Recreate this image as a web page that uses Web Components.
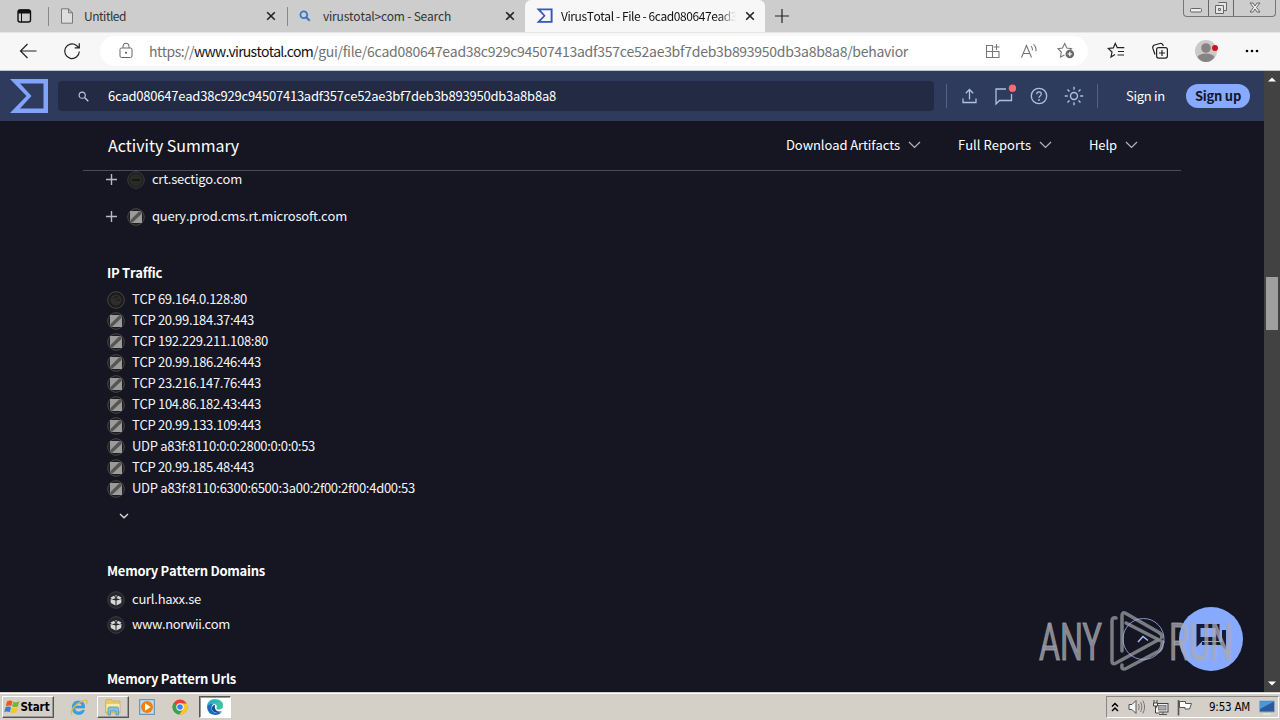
<!DOCTYPE html>
<html lang="en">
<head>
<meta charset="utf-8">
<title>VirusTotal - File</title>
<style>
    html, body { margin: 0; height: 100%; overflow: hidden; }
    body {
        background: #151622;
        font-family: "Noto Sans CJK SC", "Noto Sans", sans-serif;
        font-size: 13px;
        line-height: 20px;
    }
</style>
</head>
<body>
<desktop-screen></desktop-screen>

<script>
const ICONS = {
    tabs: [16, 16, `<rect x="2" y="2" width="12.5" height="12" rx="2" fill="none" stroke="#111" stroke-width="1.4"/><path d="M2 3.5q0-2 2-2h8.5q2 0 2 2V5.500H2z" fill="#111"/><path d="M5.500 5v9" stroke="#111"/>`],
    page: [14, 16, `<path d="M1.500.8h7l4 4v10.400h-11zM8.500.8v4h4" fill="#dedede" stroke="#777" stroke-width="1"/>`],
    lens: [12, 12, `<circle cx="4.800" cy="4.800" r="3.400" fill="none" stroke="#3a76c4" stroke-width="1.800"/><path d="M7.200 7.200l3.500 3.500" stroke="#3a76c4" stroke-width="2"/>`],
    vt: [40, 36, `<path d="M1 1H39V35H1L17.500 18z M11 5.500L22.500 18L11 30.500H34.500V5.500z" fill="currentColor" fill-rule="evenodd"/>`],
    close: [10, 10, `<path d="M1.200 1.200l7.600 7.600M8.800 1.200L1.200 8.800" stroke="#222" stroke-width="1.600"/>`],
    add: [14, 14, `<path d="M7 0v14M0 7h14" stroke="#222" stroke-width="1.200"/>`],
    back: [18, 16, `<path d="M17.500 8H1.500M8.500 1L1.500 8l7 7" fill="none" stroke="#222" stroke-width="1.200"/>`],
    reload: [18, 18, `<path d="M16.300 9.500A7.300 7.300 0 1 1 13.500 3.500L16 5.600M16.300 1.200V5.800H11.700" fill="none" stroke="#222" stroke-width="1.200"/>`],
    lock: [14, 17, `<rect x="1" y="6" width="12" height="9.500" rx="1.500" fill="none" stroke="#666"/><path d="M4 6V4.200a3 3 0 0 1 6 0V6" fill="none" stroke="#666"/><circle cx="7" cy="10.800" r="1" fill="#555"/>`],
    apps: [16, 16, `<path d="M1.500 2.500h6v12h-6zM1.500 8.500h12.500v6h-6.500M14 8.500v6M11.500 1v6M8.500 4h6" fill="none" stroke="#777" stroke-width="1.100"/>`],
    read: [18, 16, `<path d="M1.500 14.500L6.500 2.500l5 12M3.300 10.500h6.400M11 3.200q1.700 1.500 1.500 4M13.500 1.300q3 2.700 2.500 7" fill="none" stroke="#777" stroke-width="1.100"/>`],
    staradd: [18, 17, `<path d="M7.500 13L3.500 15l.8-5-3.300-3.300 4.500-.7L7.700 1.500 9.800 6l4.700.7-1.500 1.500" fill="none" stroke="#777" stroke-width="1.100"/><circle cx="12.800" cy="12" r="4.300" fill="#666"/><path d="M12.800 9.700v4.600M10.500 12h4.600" stroke="#fff" stroke-width="1.200"/>`],
    favs: [18, 17, `<path d="M8 12.500L4 15l1-5-3.700-3.500 5-.6L8.300 1.500 10.300 5.700h7M11 9.500h6M10.500 13h6.500" fill="none" stroke="#222" stroke-width="1.200"/>`],
    collect: [18, 18, `<path d="M4 12.500L1.800 6.200Q1.300 3.800 3.500 3L9 1.500q2-.5 2.800 1.200L12.300 4" fill="none" stroke="#222" stroke-width="1.200"/><rect x="5.600" y="5.600" width="10.800" height="10.500" rx="2" fill="#f7f7f7" stroke="#222" stroke-width="1.200"/><path d="M11 8v6M8 11h6" stroke="#222" stroke-width="1.200"/>`],
    avatar: [24, 24, `<circle cx="12" cy="12" r="11" fill="#ccc9c7"/><circle cx="12" cy="9" r="4.800" fill="#858383"/><path d="M3.500 18q2-3.500 8.500-3.500t8.500 3.500q-3 5-8.500 5t-8.500-5z" fill="#858383"/><circle cx="21" cy="9" r="3" fill="#d4101d"/>`],
    dots: [14, 4, `<circle cx="2" cy="2" r="1.300"/><circle cx="7" cy="2" r="1.300"/><circle cx="12" cy="2" r="1.300"/>`],
    search: [11, 11, `<circle cx="4.200" cy="4.200" r="3.100" fill="none" stroke="#c4cde2" stroke-width="1.100"/><path d="M6.500 6.500l3.800 3.800" stroke="#c4cde2" stroke-width="1.300"/>`],
    upload: [15, 16, `<path d="M1 10.500v4h13v-4M7.500 11.500V1.800M3.800 5.200L7.500 1.500l3.700 3.700" fill="none" stroke="#aebfe2" stroke-width="1.300"/>`],
    chat: [24, 22, `<path d="M14 5H4v15l3.500-3.500H19.500V10" fill="none" stroke="#aebfe2" stroke-width="1.300"/><circle cx="20.500" cy="4.200" r="3.700" fill="#fa6a73"/>`],
    help: [18, 18, `<circle cx="9" cy="9" r="7.700" fill="none" stroke="#aebfe2" stroke-width="1.300"/><path d="M6.700 7.300q0-2.400 2.300-2.400t2.300 2.100q0 1.100-1.200 1.900T9 10.900" fill="none" stroke="#aebfe2" stroke-width="1.200"/><circle cx="9" cy="13" r=".9" fill="#aebfe2"/>`],
    sun: [20, 20, `<circle cx="10" cy="10" r="3.500" fill="none" stroke="#aebfe2" stroke-width="1.400"/><path d="M10 .8v3M10 16.200v3M.8 10h3M16.200 10h3M3.500 3.500l2 2M14.500 14.500l2 2M3.500 16.500l2-2M14.500 5.500l2-2" stroke="#aebfe2" stroke-width="1.400"/>`],
    caret: [13, 8, `<path d="M1 1l5.500 5.500L12 1" fill="none" stroke="#b4b5c2" stroke-width="1.200"/>`],
    more: [10, 6, `<path d="M1 1l4 3.800L9 1" fill="none" stroke="#ddd" stroke-width="1.300"/>`],
    plus: [11, 11, `<path d="M5.500 0v11M0 5.500h11" stroke="#b9bac2" stroke-width="1.400"/>`],
    minus: [18, 18, `<circle cx="9" cy="9" r="8.300" fill="#202020" stroke="#3a3938"/><circle cx="9" cy="9" r="6.300" fill="#2b2b26"/><path d="M5 9h8" stroke="#11120f" stroke-width="1.500"/>`],
    dark: [18, 18, `<circle cx="9" cy="9" r="8.300" fill="#1b1b1d" stroke="#464544"/><circle cx="9" cy="9" r="5.600" fill="#2f2e2c"/><path d="M6 8q2-3 5-2M9 9h4" stroke="#151515" fill="none"/>`],
    square: [18, 18, `<circle cx="9" cy="9" r="8.300" fill="#1d1c20" stroke="#4a4844"/><path d="M3 3h10.500L15 5v10H4.500L3 13z" fill="#9b9b9b"/><path d="M12 3.500L3.500 12v2.500h2L14.500 6V3.500z" fill="#565553"/>`],
    cube: [18, 18, `<circle cx="9" cy="9" r="8.300" fill="#24252b" stroke="#3c3c40"/><path d="M3.500 6.500L7 4.800l1.600 2.500-3.600.9zM14.500 6.500L11 4.800 9.400 7.300l3.600.9zM3.500 8l5 1.600v5L3.800 12zM14.500 8l-5 1.600v5l4.700-2.600z" fill="#d6d6d6"/><path d="M7.800 4.200h2.400L9 6z" fill="#aaa"/>`],
    windows: [17, 16, `<path d="M3 2.500q3-2 5.500-.3L7.300 7Q4.800 5.800 1.800 7.200z" fill="#e55b20"/><path d="M9.300 2.800q3 1.200 6-.6L14 7.200q-3 1.600-5.900.2z" fill="#74b63c"/><path d="M1.500 8.200q3-1.500 5.500 0l-1.200 5Q3 12 .3 13.300z" fill="#3680d0"/><path d="M7.900 8.400q3 1.400 5.900-.1l-1.300 5q-3 1.500-5.900.1z" fill="#f5c427"/>`],
    ie: [18, 18, `<path d="M14.500 10H4.700q.2 4 4.200 4 2.500 0 3.300-1.800h2.200Q13 16.500 9 16.500q-6.700 0-6.700-7T9 3q6.200 0 5.500 7zM4.900 8h7.200Q11.900 5 8.700 5T4.900 8z" fill="#39a4df" stroke="#2481c0" stroke-width=".5"/><path d="M2 16.500Q-.5 14 5 8.300T16 2.200q2.500 1 .3 4" fill="none" stroke="#eaba3a" stroke-width="1.300"/>`],
    explorer: [18, 18, `<path d="M1.500 3.500l1-2h5l1 1.500h7.500v12h-14.500z" fill="#e9c968" stroke="#c3a34d" stroke-width=".6"/><path d="M2.500 6h13v7h-13z" fill="#faeaa5"/><path d="M4 17v-6.500q0-1.500 1.500-1.500h7.500q1.500 0 1.500 1.500V17h-2.500v-4H6.500v4z" fill="#7cc4e4" stroke="#4a91b7" stroke-width=".7"/>`],
    media: [16, 16, `<rect x=".7" y=".7" width="14.600" height="14.600" fill="#c3dcf1" stroke="#5188b9"/><circle cx="8" cy="8" r="6" fill="#f08012"/><path d="M6 4.300l5.700 3.700L6 11.700z" fill="#fff"/>`],
    chrome: [16, 16, `<circle cx="8" cy="8" r="7.500" fill="#e64133"/><path d="M8 8L1.500 4.300A7.500 7.500 0 0 0 7 15.450L11.300 10z" fill="#35a552"/><path d="M8 8l3.300 2L7.200 15.500A7.500 7.500 0 0 0 14.700 4.600H8z" fill="#f9c821"/><circle cx="8" cy="8" r="3.700" fill="#fff"/><circle cx="8" cy="8" r="2.800" fill="#3f82eb"/>`],
    edge: [18, 18, `<path d="M1 9Q1.300 1 9 1q7.700 0 8 6.500Q17 11.500 13 11.500q-3 0-2.500-1.500Q12 6.500 7.500 6 3 6 1 9z" fill="#3bc2a5"/><path d="M1 9Q2 2.500 8.500 2.500 12 2.700 13 5q-6-3-9 3z" fill="#29a5dc"/><path d="M1 9q2-3.500 6.500-3Q5 7.500 5.500 11q1.500 4.500 6.500 4 2.700-.4 4-1.500Q13.500 17.200 9 17 1.500 16.500 1 9z" fill="#176dbc"/><path d="M5.500 10q1.500-3.500 3.500-3-.8 3 1 5.200 2.500 2 6 .7-.7 1.600-4 2Q6.500 15 5.500 10z" fill="#124c99"/>`],
    up: [8, 10, `<path d="M1 4.500l3-3 3 3M1 9l3-3 3 3" fill="none" stroke="#000" stroke-width="1.500"/>`],
    sound: [18, 16, `<path d="M1 5.500h3l4-4v13l-4-4H1z" fill="#f7f7f7" stroke="#555"/><path d="M10.500 5q1.500 3 0 6M12.700 3q2.600 5 0 10M14.800 1.500q3.500 6.500 0 13" fill="none" stroke="#777"/>`],
    network: [18, 17, `<rect x="4.500" y="4.500" width="11.500" height="8.500" fill="#eee" stroke="#444"/><rect x="6.500" y="6.500" width="7.500" height="4.500" fill="#aaa" stroke="#666" stroke-width=".7"/><path d="M7 15.500h8M11 13v2" stroke="#555"/><path d="M2 1v3M5 1v3M1.500 4h4v3h-4zM3.500 7v7h4" fill="#fff" stroke="#444"/>`],
    flag: [17, 17, `<path d="M2.500 1v15.500" stroke="#555" stroke-width="1.600"/><path d="M3.500 2.500h6v2h6L13.500 10H9V8.500H3.500z" fill="#fff" stroke="#555"/>`],
    monitor: [16, 15, `<path d="M.5 1h15v11H.5z" fill="#2b5b9b" stroke="#8eaacb"/><path d="M1 1.500h14L1 9z" fill="#4b98d7"/><path d="M4 14h8" stroke="#eee"/>`],
    scrollup: [8, 5, `<path d="M0 4.500L4 .5l4 4z" fill="#fff"/>`],
    scrolldown: [8, 5, `<path d="M0 .5l4 4 4-4z" fill="#fff"/>`]
};

class XIcon extends HTMLElement {
    connectedCallback() {
        const [w, h, body] = ICONS[this.getAttribute("name")];
        const width = this.getAttribute("width") || w;
        const root = this.shadowRoot || this.attachShadow({mode: "open"});
        root.innerHTML = `
            <style>
                :host { display: block; flex: none; }
                svg { display: block; }
            </style>
            <svg width="${width}" height="${width * h / w}" viewBox="0 0 ${w} ${h}">${body}</svg>
        `;
    }
}
customElements.define("x-icon", XIcon);

// One line of text, tracked so that it fills the given width
class FitText extends HTMLElement {
    connectedCallback() {
        const root = this.shadowRoot || this.attachShadow({mode: "open"});
        root.innerHTML = `
            <style>
                :host { display: flex; flex: none; white-space: nowrap; }
                span { flex: none; font-kerning: none; font-variant-ligatures: none; }
            </style>
            <span><slot></slot></span>
        `;
        const span = root.querySelector("span");
        const width = Number(this.getAttribute("width"));
        const spare = width - span.getBoundingClientRect().width;
        span.style.letterSpacing = `${spare / this.textContent.length}px`;
        this.style.width = `${width}px`;
    }
}
customElements.define("fit-text", FitText);

class BrowserTab extends HTMLElement {
    constructor() {
        super();
        this.attachShadow({mode: "open"}).innerHTML = `
            <style>
                :host {
                    display: flex;
                    align-items: center;
                    box-sizing: border-box;
                    width: 239px;
                    height: 32px;
                    padding: 0 10px 0 12px;
                    color: #333;
                    font-size: 12px;
                    border-left: 1px solid transparent;
                    background: linear-gradient(#888, #888) 0 50% / 1px 19px no-repeat;
                }
                :host([active]) {
                    width: 240px;
                    padding-left: 10px;
                    background: #f7f7f7;
                    border-radius: 6px 6px 0 0;
                    color: #111;
                }
                :host([active]) .title {
                    -webkit-mask-image: linear-gradient(90deg, #000 90%, transparent);
                    mask-image: linear-gradient(90deg, #000 90%, transparent);
                }
                .icon { width: 24px; }
                :host([active]) .icon { width: 25px; }
                .title { flex: 1; overflow: hidden; margin-right: 9px; }
            </style>
            <div class="icon"><slot name="icon"></slot></div>
            <div class="title"><slot></slot></div>
            <x-icon name="close"></x-icon>
        `;
    }
}
customElements.define("browser-tab", BrowserTab);

class TabStrip extends HTMLElement {
    connectedCallback() {
        this.attachShadow({mode: "open"}).innerHTML = `
            <style>
                :host { display: flex; height: 32px; background: #cdcdcd; align-items: center; }
                .switcher { width: 31px; padding-left: 16px; }
                .new { margin-left: 10px; flex: 1; }
                .controls {
                    display: flex;
                    align-self: flex-start;
                    width: 93px;
                    height: 17px;
                    margin-right: 4px;
                    box-sizing: border-box;
                    border: 1px solid #777;
                    border-top: 0;
                    border-radius: 0 0 4px 4px;
                }
                .controls svg { display: block; }
                [slot=icon] { color: #3557b7; }
            </style>
            <div class="switcher"><x-icon name="tabs"></x-icon></div>
            <browser-tab><x-icon slot="icon" name="page"></x-icon><fit-text width="42">Untitled</fit-text></browser-tab>
            <browser-tab><x-icon slot="icon" name="lens"></x-icon><fit-text width="128">virustotal&gt;com - Search</fit-text></browser-tab>
            <browser-tab active><x-icon slot="icon" name="vt" width="17"></x-icon><fit-text width="176">VirusTotal - File - 6cad080647ead3</fit-text></browser-tab>
            <x-icon class="new" name="add"></x-icon>
            <div class="controls">
                <svg width="91" height="16" fill="none" stroke="#666">
                    <path d="M24.500 0v16M49.500 0v16"/>
                    <rect x="6.500" y="8.500" width="11" height="3.500" rx="1" fill="#eee"/>
                    <path d="M34.500 2.500h8v8h-3M31.500 5.500h8v8h-8zM34.500 8.500h2v2h-2z" fill="#e5e5e5"/>
                    <path d="M66 3h3l2 3 2-3h3l-3.500 4.500L76 12h-3l-2-3-2 3h-3l3.500-4.500z" fill="#eee"/>
                </svg>
            </div>
        `;
    }
}
customElements.define("tab-strip", TabStrip);

class AddressBar extends HTMLElement {
    connectedCallback() {
        this.attachShadow({mode: "open"}).innerHTML = `
            <style>
                :host {
                    display: flex;
                    align-items: center;
                    box-sizing: border-box;
                    height: 39px;
                    padding: 0 21px 2px 19px;
                    background: #f7f7f7;
                    border-top: 1px solid #e4e4e4;
                    border-bottom: 1px solid #b9c5d4;
                }
                .reload { margin: 0 19px 0 26px; }
                .pill {
                    display: flex;
                    align-items: center;
                    box-sizing: border-box;
                    width: 988px;
                    height: 30px;
                    padding: 0 13px 0 19px;
                    border-radius: 15px;
                    background: #fff;
                }
                .url { display: flex; flex: 1; margin-left: 16px; color: #717171; font-size: 14px; }
                .url .host { color: #111; }
                .actions { display: flex; align-items: center; gap: 19px; }
                .tools { display: flex; flex: 1; align-items: center; justify-content: space-between; margin-left: 19px; }
                .tools x-icon[name=avatar] { margin-right: 1px; }
            </style>
            <x-icon name="back"></x-icon>
            <x-icon class="reload" name="reload"></x-icon>
            <div class="pill">
                <x-icon name="lock"></x-icon>
                <div class="url">
                    <fit-text width="45">https://</fit-text><fit-text class="host" width="119">www.virustotal.com</fit-text><fit-text width="595">/gui/file/6cad080647ead38c929c94507413adf357ce52ae3bf7deb3b893950db3a8b8a8/behavior</fit-text>
                </div>
                <div class="actions">
                    <x-icon name="apps"></x-icon>
                    <x-icon name="read"></x-icon>
                    <x-icon name="staradd"></x-icon>
                </div>
            </div>
            <div class="tools">
                <x-icon name="favs"></x-icon>
                <x-icon name="collect"></x-icon>
                <x-icon name="avatar"></x-icon>
                <x-icon name="dots"></x-icon>
            </div>
        `;
    }
}
customElements.define("address-bar", AddressBar);

class SiteHeader extends HTMLElement {
    connectedCallback() {
        this.attachShadow({mode: "open"}).innerHTML = `
            <style>
                :host {
                    display: flex;
                    align-items: center;
                    box-sizing: border-box;
                    height: 50px;
                    padding: 0 14px 0 9px;
                    background: #2f3b5c;
                    color: #fff;
                }
                .logo { color: #82a3fb; }
                .search {
                    display: flex;
                    align-items: center;
                    box-sizing: border-box;
                    width: 876px;
                    height: 30px;
                    margin-left: 9px;
                    padding-left: 20px;
                    gap: 19px;
                    border-radius: 4px;
                    background: #232b44;
                }
                .icons {
                    display: grid;
                    grid-template-columns: repeat(4, 35px);
                    place-items: center;
                    box-sizing: border-box;
                    height: 24px;
                    width: 152px;
                    margin-left: 12px;
                    padding-left: 4.500px;
                    border: 1px solid #536284;
                    border-width: 0 1px;
                }
                .icons x-icon[name=chat] { margin-top: -2px; }
                .signin { margin-left: 28px; }
                .signup {
                    display: flex;
                    justify-content: center;
                    align-items: center;
                    width: 64px;
                    height: 24px;
                    margin-left: 21px;
                    border-radius: 12px;
                    background: #87a9ff;
                    color: #151622;
                    font-weight: 700;
                }
            </style>
            <x-icon class="logo" name="vt"></x-icon>
            <div class="search">
                <x-icon name="search"></x-icon>
                <fit-text width="448">6cad080647ead38c929c94507413adf357ce52ae3bf7deb3b893950db3a8b8a8</fit-text>
            </div>
            <div class="icons">
                <x-icon name="upload"></x-icon>
                <x-icon name="chat"></x-icon>
                <x-icon name="help"></x-icon>
                <x-icon name="sun"></x-icon>
            </div>
            <fit-text class="signin" width="39">Sign in</fit-text>
            <div class="signup"><fit-text width="46">Sign up</fit-text></div>
        `;
    }
}
customElements.define("site-header", SiteHeader);

class SummaryBar extends HTMLElement {
    connectedCallback() {
        this.attachShadow({mode: "open"}).innerHTML = `
            <style>
                :host {
                    display: flex;
                    align-items: center;
                    box-sizing: border-box;
                    height: 50px;
                    margin: 0 83px;
                    padding: 0 43px 2px 25px;
                    border-bottom: 1px solid #4b4b5b;
                    color: #fff;
                }
                .title { flex: 1; font-size: 16px; }
                .menu { display: flex; align-items: center; gap: 8px; margin-left: 37px; }
            </style>
            <div class="title"><fit-text width="131">Activity Summary</fit-text></div>
            <div class="menu"><fit-text width="114">Download Artifacts</fit-text><x-icon name="caret"></x-icon></div>
            <div class="menu"><fit-text width="73">Full Reports</fit-text><x-icon name="caret"></x-icon></div>
            <div class="menu"><fit-text width="28">Help</fit-text><x-icon name="caret"></x-icon></div>
        `;
    }
}
customElements.define("summary-bar", SummaryBar);

class ReportRow extends HTMLElement {
    connectedCallback() {
        const expandable = this.hasAttribute("expandable");
        this.attachShadow({mode: "open"}).innerHTML = `
            <style>
                :host { display: flex; align-items: center; height: var(--row-height, 21px); padding-left: 107px; color: #f4f4f8; }
                .toggle { margin: 0 10px 0 -1px; }
                fit-text { margin: 0 0 2px 7px; }
            </style>
            ${expandable ? `<x-icon class="toggle" name="plus"></x-icon>` : ""}
            <x-icon name="${this.getAttribute("icon")}"></x-icon>
            <fit-text width="${this.getAttribute("width")}">${this.getAttribute("label")}</fit-text>
        `;
    }
}
customElements.define("report-row", ReportRow);

class BehaviorReport extends HTMLElement {
    connectedCallback() {
        const traffic = [
            ["dark", 115, "TCP 69.164.0.128:80"],
            ["square", 122, "TCP 20.99.184.37:443"],
            ["square", 136, "TCP 192.229.211.108:80"],
            ["square", 129, "TCP 20.99.186.246:443"],
            ["square", 129, "TCP 23.216.147.76:443"],
            ["square", 129, "TCP 104.86.182.43:443"],
            ["square", 129, "TCP 20.99.133.109:443"],
            ["square", 183, "UDP a83f:8110:0:0:2800:0:0:0:53"],
            ["square", 122, "TCP 20.99.185.48:443"],
            ["square", 283, "UDP a83f:8110:6300:6500:3a00:2f00:2f00:4d00:53"]
        ];
        this.attachShadow({mode: "open"}).innerHTML = `
            <style>
                :host { display: block; flex: 1; min-height: 0; overflow: hidden; }
                .domains { margin-top: -10px; --row-height: 37px; }
                .patterns { --row-height: 25px; }
                h4 { margin: 28px 0 6px 107px; height: 20px; font-size: 13px; font-weight: 700; color: #fff; }
                .patterns + h4 { margin-top: 32px; }
                .more { display: flex; align-items: center; height: 34px; padding-left: 119px; }
            </style>
            <div class="domains">
                <report-row expandable icon="minus" width="90" label="crt.sectigo.com"></report-row>
                <report-row expandable icon="square" width="195" label="query.prod.cms.rt.microsoft.com"></report-row>
            </div>
            <h4><fit-text width="55">IP Traffic</fit-text></h4>
            <div>${traffic.map(([icon, width, label]) => `<report-row icon="${icon}" width="${width}" label="${label}"></report-row>`).join("")}</div>
            <div class="more"><x-icon name="more"></x-icon></div>
            <h4><fit-text width="158">Memory Pattern Domains</fit-text></h4>
            <div class="patterns">
                <report-row icon="cube" width="69" label="curl.haxx.se"></report-row>
                <report-row icon="cube" width="98" label="www.norwii.com"></report-row>
            </div>
            <h4><fit-text width="129">Memory Pattern Urls</fit-text></h4>
        `;
    }
}
customElements.define("behavior-report", BehaviorReport);

class ScrollTrack extends HTMLElement {
    connectedCallback() {
        this.attachShadow({mode: "open"}).innerHTML = `
            <style>
                :host {
                    display: grid;
                    grid-template-rows: 206px 53px 1fr;
                    justify-items: center;
                    width: 16px;
                    background: #424242;
                }
                .thumb { width: 12px; background: #9f9f9f; }
                .top { padding-top: 6px; }
                .bottom { align-self: end; padding-bottom: 6px; }
            </style>
            <x-icon class="top" name="scrollup"></x-icon>
            <div class="thumb"></div>
            <x-icon class="bottom" name="scrolldown"></x-icon>
        `;
    }
}
customElements.define("scroll-track", ScrollTrack);

class TaskBar extends HTMLElement {
    connectedCallback() {
        this.attachShadow({mode: "open"}).innerHTML = `
            <style>
                :host {
                    display: flex;
                    align-items: center;
                    box-sizing: border-box;
                    height: 28px;
                    padding: 3px 1px 1px 2px;
                    background: linear-gradient(#d5d0c7 1px, #fff 1px 2px, #d5d0c7 2px);
                    font-family: "DejaVu Sans Condensed", "DejaVu Sans", sans-serif;
                    font-size: 12px;
                    color: #000;
                }
                .button {
                    display: flex;
                    flex: none;
                    align-items: center;
                    justify-content: center;
                    box-sizing: border-box;
                    width: 32px;
                    height: 22px;
                    border: 1px solid;
                    border-color: #fff #555 #555 #fff;
                    box-shadow: inset -1px -1px #999;
                }
                .start { width: 52px; padding-right: 3px; font-weight: 700; font-size: 11.500px; }
                .ie { margin: 0 9px 0 16px; }
                .media { margin: 0 17px 0 10px; }
                .edge { margin-left: 11px; background: #fff; border-color: #555 #fff #fff #555; box-shadow: inset 1px 1px #999; }
                .tray {
                    display: flex;
                    align-items: center;
                    box-sizing: border-box;
                    width: 173px;
                    height: 22px;
                    margin-left: auto;
                    padding-left: 4px;
                    border: 1px solid;
                    border-color: #888 #fff #fff #888;
                }
                .tray x-icon + x-icon { margin-left: 6px; }
                .tray x-icon[name=sound] { margin-left: 9px; }
                .clock { margin: 0 9px 0 16px; font-size: 11.500px; }
            </style>
            <div class="button start"><x-icon name="windows"></x-icon><fit-text width="29">Start</fit-text></div>
            <x-icon class="ie" name="ie"></x-icon>
            <div class="button"><x-icon name="explorer"></x-icon></div>
            <x-icon class="media" name="media"></x-icon>
            <x-icon name="chrome"></x-icon>
            <div class="button edge"><x-icon name="edge"></x-icon></div>
            <div class="tray">
                <x-icon name="up"></x-icon>
                <x-icon name="sound"></x-icon>
                <x-icon name="network"></x-icon>
                <x-icon name="flag"></x-icon>
                <fit-text class="clock" width="41">9:53 AM</fit-text>
                <x-icon name="monitor"></x-icon>
            </div>
        `;
    }
}
customElements.define("task-bar", TaskBar);

// Floating chat and back-to-top buttons, with the recorder's mark over them
class FloatingMarks extends HTMLElement {
    connectedCallback() {
        this.attachShadow({mode: "open"}).innerHTML = `
            <style>
                :host { position: absolute; left: 1030px; top: 600px; }
                svg { display: block; }
                text { font-family: Roboto, sans-serif; font-size: 52px; }
            </style>
            <svg width="250" height="80" viewBox="1030 600 250 80">
                <circle cx="1211" cy="639" r="32" fill="#87a9ff"/>
                <path d="M1196.500 624h23v17h-17l-6 6zM1200.500 628v9h15v-9z" fill="#171c34" fill-rule="evenodd"/>
                <path d="M1222 630h4v20l-5-5h-19v-3h20z" fill="#171c34"/>
                <g fill="none" stroke="#85878e" stroke-opacity=".9" stroke-width="3.500" stroke-linejoin="round" stroke-linecap="round">
                    <path d="M1116 618q-4-1-4 3V661q0 4 4 2L1158 640"/>
                    <path d="M1122 651V616q0-5 4-2.500l33 19q4 3 2.500 5"/>
                    <path d="M1126 623l37 19"/>
                    <path d="M1122 665q-1 6 5 3l32-17q3-2 3-7"/>
                </g>
                <g fill="#a9abb3" fill-opacity=".75" stroke="#a9abb3" stroke-opacity=".7" stroke-width="1.200">
                    <text x="1039" y="660" textLength="63" lengthAdjust="spacingAndGlyphs">ANY</text>
                    <text x="1169" y="660" textLength="64" lengthAdjust="spacingAndGlyphs">RUN</text>
                </g>
                <circle cx="1143.500" cy="639" r="20.500" fill="none" stroke="#a6b2ee" stroke-opacity=".8"/>
                <path d="M1138 642l5-5.500 5 4" fill="none" stroke="#a7bcff" stroke-width="1.500"/>
            </svg>
        `;
    }
}
customElements.define("floating-marks", FloatingMarks);

class DesktopScreen extends HTMLElement {
    connectedCallback() {
        this.attachShadow({mode: "open"}).innerHTML = `
            <style>
                :host { display: flex; flex-direction: column; position: relative; width: 1280px; height: 720px; overflow: hidden; }
                .view { display: flex; flex: 1; min-height: 0; }
                .page { display: flex; flex-direction: column; flex: 1; min-width: 0; background: #151622; }
            </style>
            <tab-strip></tab-strip>
            <address-bar></address-bar>
            <div class="view">
                <div class="page">
                    <site-header></site-header>
                    <summary-bar></summary-bar>
                    <behavior-report></behavior-report>
                </div>
                <scroll-track></scroll-track>
            </div>
            <task-bar></task-bar>
            <floating-marks></floating-marks>
        `;
    }
}
customElements.define("desktop-screen", DesktopScreen);
</script>
</body>
</html>
